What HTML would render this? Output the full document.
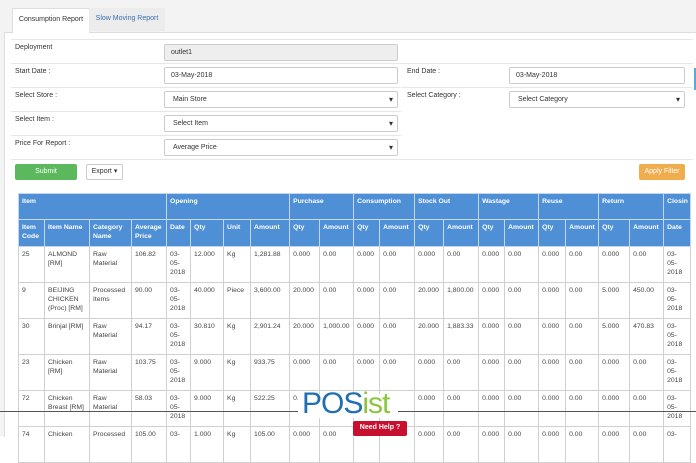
<!DOCTYPE html><html><head><style>
body{margin:0;width:696px;height:436px;overflow:hidden;background:#fff;font-family:"Liberation Sans",sans-serif;font-size:7px;color:#333;position:relative}
.abs{position:absolute}
.lbl{position:absolute;font-size:7px;color:#333}
.inp{position:absolute;border:1px solid #ccc;border-radius:2px;background:#fff;font-size:7px;line-height:15px;padding-left:6px;box-sizing:border-box;height:17px}
.sel::after{content:"▾";position:absolute;right:4px;top:0;font-size:8px;color:#333}
.hr{position:absolute;left:11px;width:682px;height:1px;background:#e6e6e6}
table{position:absolute;left:18px;top:193px;border-collapse:collapse;table-layout:fixed;width:672px}
td,th{border:1.5px solid #d0d0d0;padding:3px 3px;vertical-align:top;font-size:6.8px;line-height:9px;text-align:left;overflow:hidden;white-space:normal}
th{background:#4f8fd6;color:#fff;font-weight:bold;border-color:#c6d6ea}
td{height:29px;color:#444}
</style></head><body>
<div class="abs" style="left:0;top:0;width:696px;height:436px;background:#f3f3f3"></div>
<div class="abs" style="left:4px;top:32px;width:692px;height:404px;background:#fff;border-left:1px solid #ddd;border-top:1px solid #ddd"></div>
<div class="abs" style="left:12px;top:8px;width:76px;height:24px;background:#fff;border:1px solid #ddd;border-bottom:none;font-size:7px;line-height:22px;text-align:center;color:#333">Consumption Report</div>
<div class="abs" style="left:89px;top:8px;width:76px;height:23px;background:#ececec;font-size:7px;line-height:22px;text-align:center;color:#3a6fb0">Slow Moving Report</div>
<div class="hr" style="top:39px"></div><div class="hr" style="top:63px"></div><div class="hr" style="top:87px;width:390px"></div><div class="hr" style="top:111px;width:390px"></div><div class="hr" style="top:135px;width:390px"></div><div class="hr" style="top:159px"></div>
<div class="hr" style="top:87px;left:402px;width:290px"></div>
<div class="lbl" style="left:15px;top:44px">Deployment</div>
<div class="inp" style="left:164px;top:44px;width:234px;background:#eee">outlet1</div>
<div class="lbl" style="left:15px;top:68px">Start Date :</div>
<div class="inp" style="left:164px;top:67px;width:234px">03-May-2018</div>
<div class="lbl" style="left:407px;top:68px">End Date :</div>
<div class="inp" style="left:509px;top:67px;width:176px">03-May-2018</div>
<div class="abs" style="left:694px;top:68px;width:2px;height:22px;background:#5aa9d6"></div>
<div class="lbl" style="left:15px;top:92px">Select Store :</div>
<div class="inp sel" style="left:164px;top:91px;width:234px">&nbsp;Main Store</div>
<div class="lbl" style="left:407px;top:92px">Select Category :</div>
<div class="inp sel" style="left:509px;top:91px;width:176px">&nbsp;Select Category</div>
<div class="lbl" style="left:15px;top:116px">Select Item :</div>
<div class="inp sel" style="left:164px;top:115px;width:234px">&nbsp;Select Item</div>
<div class="lbl" style="left:15px;top:140px">Price For Report :</div>
<div class="inp sel" style="left:164px;top:139px;width:234px">&nbsp;Average Price</div>
<div class="abs" style="left:15px;top:164px;width:62px;height:16px;background:#5cb85c;border-radius:2px;color:#fff;text-align:center;line-height:16px;font-size:7px">Submit</div>
<div class="abs" style="left:86px;top:164px;width:37px;height:16px;border:1px solid #ccc;box-sizing:border-box;border-radius:2px;text-align:center;line-height:14px;font-size:7px">Export ▾</div>
<div class="abs" style="left:639px;top:164px;width:46px;height:16px;background:#f0ad4e;border-radius:2px;color:#fff;text-align:center;line-height:16px;font-size:7px">Apply Filter</div>
<table>
<colgroup><col style="width:26px"><col style="width:45px"><col style="width:42px"><col style="width:35px"><col style="width:24px"><col style="width:33px"><col style="width:27px"><col style="width:39px"><col style="width:30px"><col style="width:34px"><col style="width:26px"><col style="width:35px"><col style="width:29px"><col style="width:35px"><col style="width:26px"><col style="width:34px"><col style="width:27px"><col style="width:33px"><col style="width:31px"><col style="width:34px"><col style="width:27px"></colgroup>
<tr style="height:26px"><th colspan="4">Item</th><th colspan="4">Opening</th><th colspan="2">Purchase</th><th colspan="2">Consumption</th><th colspan="2">Stock Out</th><th colspan="2">Wastage</th><th colspan="2">Reuse</th><th colspan="2">Return</th><th>Closin</th></tr>
<tr style="height:27px"><th>Item Code</th><th>Item Name</th><th>Category Name</th><th>Average Price</th><th>Date</th><th>Qty</th><th>Unit</th><th>Amount</th><th>Qty</th><th>Amount</th><th>Qty</th><th>Amount</th><th>Qty</th><th>Amount</th><th>Qty</th><th>Amount</th><th>Qty</th><th>Amount</th><th>Qty</th><th>Amount</th><th>Date</th></tr>
<tr><td>25</td><td>ALMOND [RM]</td><td>Raw Material</td><td>106.82</td><td>03-<br>05-<br>2018</td><td>12.000</td><td>Kg</td><td>1,281.88</td><td>0.000</td><td>0.00</td><td>0.000</td><td>0.00</td><td>0.000</td><td>0.00</td><td>0.000</td><td>0.00</td><td>0.000</td><td>0.00</td><td>0.000</td><td>0.00</td><td>03-<br>05-<br>2018</td></tr>
<tr><td>9</td><td>BEIJING CHICKEN (Proc) [RM]</td><td>Processed Items</td><td>90.00</td><td>03-<br>05-<br>2018</td><td>40.000</td><td>Piece</td><td>3,600.00</td><td>20.000</td><td>0.00</td><td>0.000</td><td>0.00</td><td>20.000</td><td>1,800.00</td><td>0.000</td><td>0.00</td><td>0.000</td><td>0.00</td><td>5.000</td><td>450.00</td><td>03-<br>05-<br>2018</td></tr>
<tr><td>30</td><td>Brinjal [RM]</td><td>Raw Material</td><td>94.17</td><td>03-<br>05-<br>2018</td><td>30.810</td><td>Kg</td><td>2,901.24</td><td>20.000</td><td>1,000.00</td><td>0.000</td><td>0.00</td><td>20.000</td><td>1,883.33</td><td>0.000</td><td>0.00</td><td>0.000</td><td>0.00</td><td>5.000</td><td>470.83</td><td>03-<br>05-<br>2018</td></tr>
<tr><td>23</td><td>Chicken [RM]</td><td>Raw Material</td><td>103.75</td><td>03-<br>05-<br>2018</td><td>9.000</td><td>Kg</td><td>933.75</td><td>0.000</td><td>0.00</td><td>0.000</td><td>0.00</td><td>0.000</td><td>0.00</td><td>0.000</td><td>0.00</td><td>0.000</td><td>0.00</td><td>0.000</td><td>0.00</td><td>03-<br>05-<br>2018</td></tr>
<tr><td>72</td><td>Chicken Breast [RM]</td><td>Raw Material</td><td>58.03</td><td>03-<br>05-<br>2018</td><td>9.000</td><td>Kg</td><td>522.25</td><td>0.000</td><td>0.00</td><td>0.000</td><td>0.00</td><td>0.000</td><td>0.00</td><td>0.000</td><td>0.00</td><td>0.000</td><td>0.00</td><td>0.000</td><td>0.00</td><td>03-<br>05-<br>2018</td></tr>
<tr><td>74</td><td>Chicken</td><td>Processed</td><td>105.00</td><td>03-</td><td>1.000</td><td>Kg</td><td>105.00</td><td>0.000</td><td>0.00</td><td>0.000</td><td>0.00</td><td>0.000</td><td>0.00</td><td>0.000</td><td>0.00</td><td>0.000</td><td>0.00</td><td>0.000</td><td>0.00</td><td>03-</td></tr>
</table>
<div class="abs" style="left:0;top:411px;width:298px;height:1px;background:#555"></div>
<div class="abs" style="left:398px;top:411px;width:298px;height:1px;background:#555"></div>
<div class="abs" style="left:298px;top:394px;width:100px;height:24px;background:#fff"></div>
<div class="abs" style="left:302px;top:389px;font-size:30px;line-height:30px;letter-spacing:-1px;font-family:'Liberation Sans',sans-serif"><span style="color:#1e6fb3">POS</span><span style="color:#8cc63f">ist</span></div>
<div class="abs" style="left:353px;top:421px;width:54px;height:15px;background:#c8102e;color:#fff;font-weight:bold;font-size:7px;line-height:13px;text-align:center;border-radius:2px">Need Help ?</div>
</body></html>
